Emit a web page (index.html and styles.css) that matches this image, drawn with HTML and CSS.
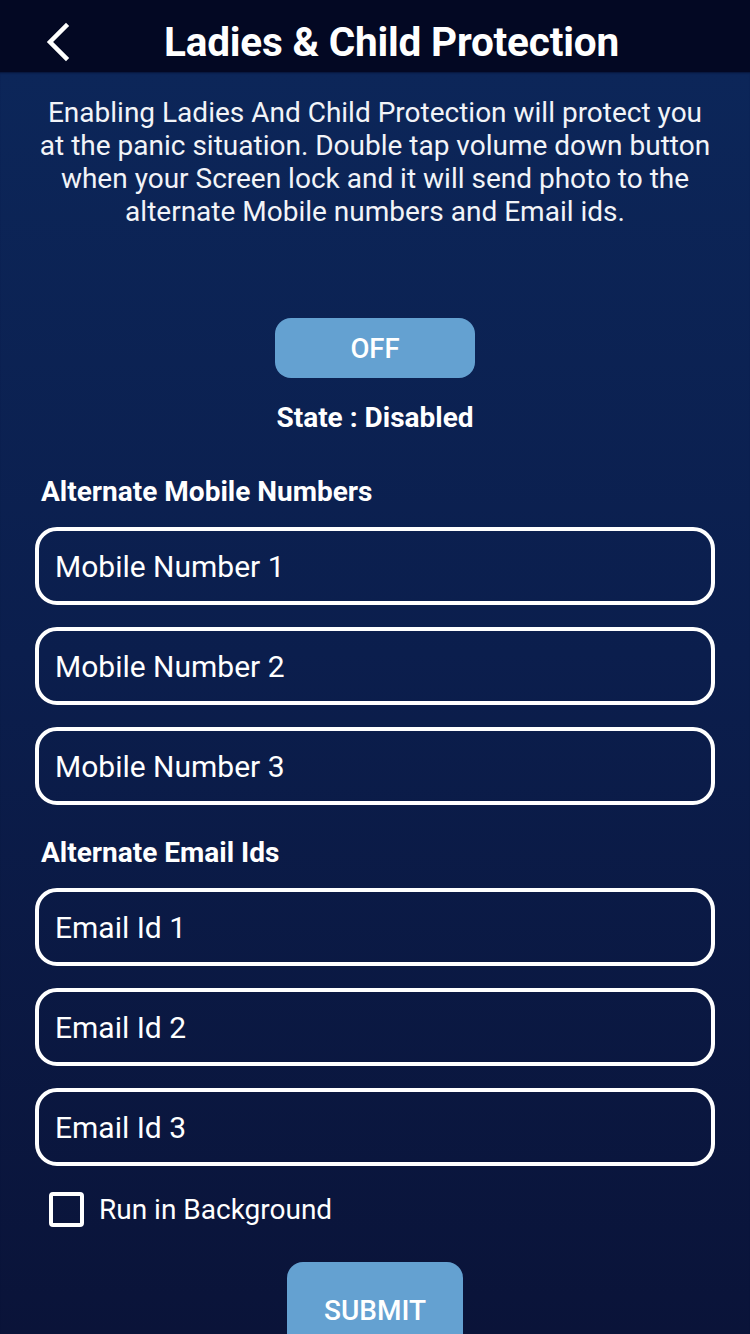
FILE: index.html
```html
<!DOCTYPE html>
<html lang="en">
<head>
    <meta charset="UTF-8" />
    <meta name="viewport" content="width=device-width, initial-scale=1.0">
    <title>Ladies & Child Protection</title>
    <link rel="stylesheet" href="styles.css">
</head>
<body>
    <header class="topbar">
        <button class="back" aria-label="Back">
            <svg width="30" height="40" viewBox="0 0 30 40">
                <polyline points="22,4 6,20 22,36" fill="none" stroke="#fff" stroke-width="4.5" stroke-linecap="square" />
            </svg>
        </button>
        <h1>Ladies &amp; Child Protection</h1>
    </header>

    <main class="content">
        <p class="intro">Enabling Ladies And Child Protection will protect you at the panic situation. Double tap volume down button when your Screen lock and it will send photo to the alternate Mobile numbers and Email ids.</p>

        <button class="toggle">OFF</button>
        <div class="state">State : Disabled</div>

        <h2 class="section">Alternate Mobile Numbers</h2>
        <div class="fields">
            <input type="text" class="field" placeholder="Mobile Number 1" />
            <input type="text" class="field" placeholder="Mobile Number 2" />
            <input type="text" class="field" placeholder="Mobile Number 3" />
        </div>

        <h2 class="section section-email">Alternate Email Ids</h2>
        <div class="fields">
            <input type="text" class="field" placeholder="Email Id 1" />
            <input type="text" class="field" placeholder="Email Id 2" />
            <input type="text" class="field" placeholder="Email Id 3" />
        </div>

        <label class="check">
            <span class="box"></span>
            <span>Run in Background</span>
        </label>

        <button class="submit">SUBMIT</button>
    </main>
</body>
</html>
```

FILE: styles.css
```css
* {
    margin: 0;
    padding: 0;
    box-sizing: border-box;
    font-family: Roboto, "Noto Sans", sans-serif;
}

body {
    width: 750px;
    height: 1334px;
    overflow: hidden;
    background-color: #0a1338;
    color: white;
    display: flex;
    flex-direction: column;
}

.topbar {
    height: 72px;
    background-color: #030823;
    display: flex;
    align-items: center;
    padding-left: 44px;
    padding-top: 12px;
    flex-shrink: 0;
}

.back {
    background: none;
    border: none;
    width: 30px;
    height: 40px;
    display: flex;
}

.topbar h1 {
    font-size: 40.5px;
    font-weight: 700;
    margin-left: 90px;
    letter-spacing: -0.2px;
}

.content {
    flex: 1;
    background: linear-gradient(to bottom, #0c2659 0%, #0b1e4d 45%, #0a1338 100%);
    display: flex;
    flex-direction: column;
    align-items: center;
    padding: 24px 35px 0;
    box-shadow: inset 0 2px 2px -1px rgba(3, 8, 35, 0.6);
}

.intro {
    font-size: 28px;
    line-height: 33px;
    text-align: center;
    color: #f2f4f8;
}

.toggle {
    margin-top: 90px;
    width: 200px;
    height: 60px;
    border: none;
    border-radius: 16px;
    background-color: #64a1d1;
    color: white;
    font-size: 27.5px;
    font-weight: 500;
}

.state {
    margin-top: 25px;
    font-size: 28px;
    line-height: 30px;
    font-weight: 700;
}

.section {
    align-self: stretch;
    margin-top: 44px;
    padding-left: 6px;
    font-size: 28px;
    line-height: 30px;
    font-weight: 700;
}

.section-email {
    margin-top: 33px;
}

.fields {
    align-self: stretch;
    display: flex;
    flex-direction: column;
    gap: 22px;
    margin-top: 20px;
}

.field {
    height: 78px;
    width: 100%;
    border: 4px solid white;
    border-radius: 22px;
    background: transparent;
    color: white;
    padding: 0 16px;
    font-size: 30px;
    outline: none;
}

.field::placeholder {
    color: white;
    opacity: 1;
}

.check {
    align-self: stretch;
    display: flex;
    align-items: center;
    gap: 15px;
    margin-top: 26px;
    padding-left: 14px;
    font-size: 28px;
}

.box {
    width: 35px;
    height: 35px;
    border: 4px solid white;
    border-radius: 4px;
}

.submit {
    margin-top: 35px;
    width: 176px;
    height: 100px;
    border: none;
    border-radius: 16px 16px 0 0;
    background-color: #64a1d1;
    color: white;
    font-size: 28px;
    font-weight: 500;
    padding-top: 49px;
    display: flex;
    align-items: flex-start;
    justify-content: center;
    line-height: 0;
}
```
